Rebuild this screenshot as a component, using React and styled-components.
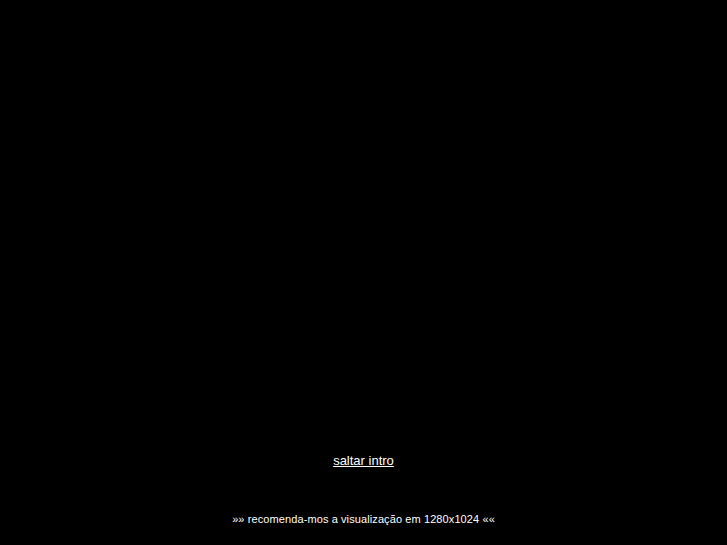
import styled, { createGlobalStyle } from "styled-components";

const Global = createGlobalStyle`
    html, body {
        margin: 0;
        padding: 0;
        background: #000;
    }
    body {
        font-family: "Liberation Sans", Arial, sans-serif;
        color: #fff;
    }
`;

const Page = styled.div`
    height: 545px;
    display: flex;
    flex-direction: column;
    align-items: center;
    background-color: #000;
`;

const Stage = styled.div`
    width: 100%;
    height: 452px;
`;

const SkipLink = styled.a`
    font-size: 13px;
    line-height: 17px;
    color: #fff;
    text-decoration: underline;
    cursor: pointer;
`;

const Note = styled.p`
    margin: 43px 0 0;
    font-size: 11px;
    line-height: 14px;
    letter-spacing: 0.1px;
    color: #fff;
`;

export default function App() {
    return (
        <>
            <Global />
            <Page>
                <Stage />
                <SkipLink href="#">saltar intro</SkipLink>
                <Note>»» recomenda-mos a visualização em 1280x1024 ««</Note>
            </Page>
        </>
    );
}
